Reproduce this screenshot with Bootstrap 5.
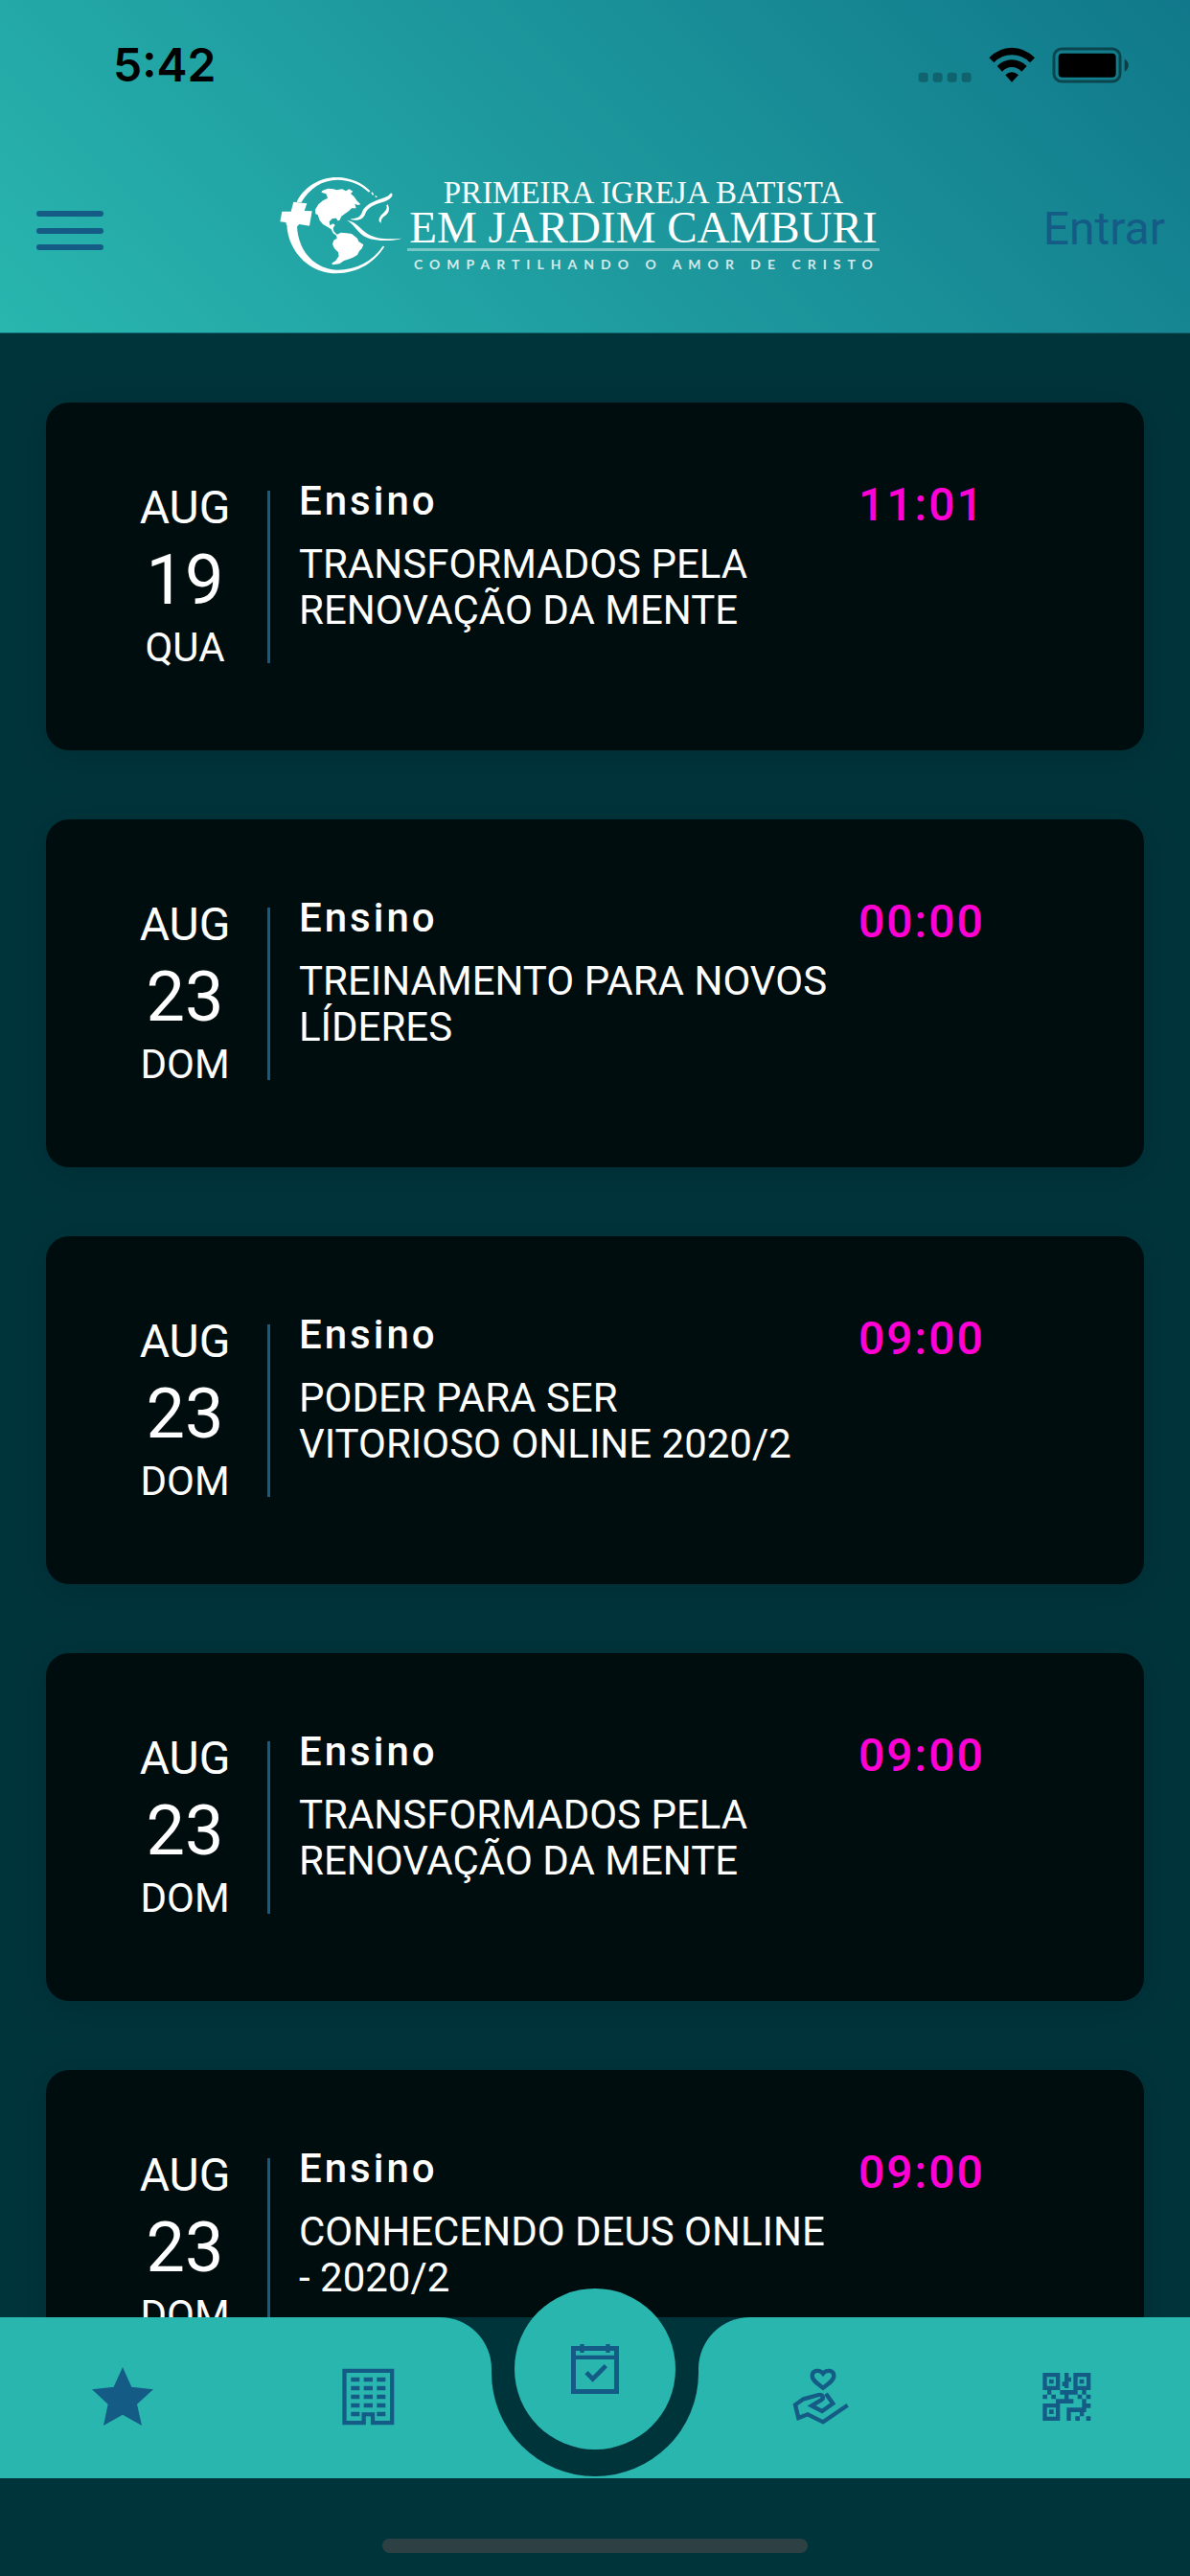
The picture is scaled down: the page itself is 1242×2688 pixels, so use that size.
<!DOCTYPE html>
<html lang="pt-BR">
<head>
<meta charset="utf-8">
<meta name="viewport" content="width=device-width, initial-scale=1">
<title>Agenda - Primeira Igreja Batista em Jardim Camburi</title>
<link href="https://cdn.jsdelivr.net/npm/bootstrap@5.3.0/dist/css/bootstrap.min.css" rel="stylesheet">
<style>
  :root { --deep: #00343b; --teal: #29b6af; --ink: #145c86; }
  body { background: var(--deep); color: #fff; font-family: Roboto, sans-serif; }
  .app-header { background: linear-gradient(45deg, #29b6af, #10788a); border-bottom: 1px solid #12606a; }
  .status-bar { height: 132px; padding: 4px 62px 0 118px; color: #000; }
  .clock { font: 600 48px/56px Inter, sans-serif; }
  .top-nav { height: 215px; padding: 2px 26px 0; }
  .menu-btn { padding: 12px; color: var(--ink); }
  .login-link { font-size: 48px; line-height: 56px; color: var(--ink); padding-bottom: 4px; }
  .brand-block { padding-bottom: 12px; }
  .brand-text { font-family: "Liberation Serif", serif; text-align: center; white-space: nowrap; }
  .brand-top { font-size: 33px; line-height: 34px; }
  .brand-main { font-size: 47px; line-height: 38px; }
  .brand-rule { height: 3px; margin: 3px 0 4px; background: rgba(255,255,255,.4); }
  .brand-tag { font: 700 14px/20px Lato, sans-serif; letter-spacing: 7px; padding-left: 7px; opacity: .8; }
  .agenda { min-height: 0; overflow-y: auto; scrollbar-width: none; padding: 72px 48px; }
  .agenda::-webkit-scrollbar { display: none; }
  .agenda-list { gap: 72px; }
  .event { min-height: 363px; border-radius: 24px; background: #000d0e; padding: 0 0 0 84px; box-shadow: 0 6px 40px rgba(0,0,0,.12); }
  .event-date { width: 122px; gap: 3px; }
  .month { font-size: 48px; line-height: 54px; }
  .day { font-size: 72px; line-height: 84px; margin-top: 4px; }
  .weekday { font-size: 42px; line-height: 50px; }
  .divider { width: 3px; height: 180px; margin: 0 30px 0 25px; background: var(--ink); }
  .event-body { padding-top: 78px; gap: 32px; }
  .event-kind { font-size: 42px; line-height: 50px; font-weight: 500; letter-spacing: 3px; margin: 0 0 17px; }
  .event-title { font-size: 42px; line-height: 48px; margin: 0; }
  .event-time { flex: 0 0 298px; font-size: 48px; line-height: 58px; font-weight: 500; letter-spacing: 2px; color: #ff00d4; }
  .tab-row { height: 168px; background: var(--deep); }
  .tab-side { background: var(--teal); }
  .tab-left { border-top-right-radius: 54px; }
  .tab-right { border-top-left-radius: 54px; }
  .tab-mid { width: 216px; background: linear-gradient(var(--deep) 54px, var(--teal) 54px); }
  .notch { height: 166px; border-radius: 0 0 108px 108px; background: var(--deep); }
  .tab-link, .tab-fab { color: var(--ink); }
  .tab-fab { top: -30px; width: 168px; height: 168px; background: var(--teal); }
  .home-zone { height: 102px; padding-top: 63px; background: var(--deep); }
  .home-bar { width: 444px; height: 15px; background: #2d4145; }
</style>
</head>
<body>
<div class="vh-100 d-flex flex-column overflow-hidden">
  <header class="app-header flex-shrink-0">
    <div class="status-bar d-flex align-items-center justify-content-between">
      <span class="clock">5:42</span>
      <svg width="222" height="38" viewBox="82 55 666 114" aria-hidden="true">
        <g fill-opacity=".25"><rect x="84" y="135" width="30" height="30" rx="9"/><rect x="129" y="135" width="30" height="30" rx="9"/><rect x="174" y="135" width="30" height="30" rx="9"/><rect x="219" y="135" width="30" height="30" rx="9"/></g>
        <path d="M305 89Q335 57 376 57T448 89L433 104Q409 80 376 80T320 104Z"/>
        <path d="M330 115Q350 95 376 95T423 115L407 132Q393 118 376 118T346 132Z"/>
        <path d="M356 143Q365 134 376 134T397 143L376 165Z"/>
        <rect x="508" y="61" width="207" height="102" rx="24" fill="none" stroke="#000" stroke-opacity=".45" stroke-width="9"/>
        <rect x="522" y="75" width="180" height="75" rx="12"/>
        <path d="M729 93Q741 98 741 112T729 132Z" fill-opacity=".5"/>
      </svg>
    </div>
    <nav class="top-nav d-flex align-items-center justify-content-between" aria-label="Principal">
      <button type="button" class="menu-btn btn border-0" aria-label="Abrir menu">
        <svg class="d-block" width="70" height="42" viewBox="0 0 70 42" stroke="currentColor" stroke-width="6" stroke-linecap="round"><path d="M3 3H67M3 21H67M3 38H67"/></svg>
      </button>
      <div class="brand-block d-flex align-items-center gap-1">
        <svg width="130" height="102" viewBox="42 42 390 306" fill="#fff" aria-hidden="true">
          <!-- orbit ring, thick on the lower left -->
          <path d="M98 122C120 75 172 44 226 45C266 46 304 62 328 88L324 92C298 68 264 53 226 53C178 53 138 80 112 124Z"/>
          <path d="M334 91L340 99L336 101L331 94ZM343 101L351 106L345 109Z"/>
          <path d="M67 188C68 275 135 345 222 346C290 345 342 312 373 262L368 260C335 308 285 335 225 335C150 332 98 270 99 190Z"/>
          <!-- cross -->
          <path d="M88 122L130 127L122 150L146 151L138 197L106 192L98 200L66 194L64 186L46 184L52 152L80 152Z"/>
          <!-- North America -->
          <path d="M178 87L196 80L214 82L222 85L240 82L252 88L262 82L274 89L267 96L278 106L286 118L298 130L290 132L280 128L284 142L270 142L262 150L248 160L238 167L232 180L226 181L222 173L210 174L200 184L202 196L212 190L218 194L212 204L214 214L224 224L232 228L226 230L212 220L206 208L194 200L180 192L170 180L164 162L157 160L156 146L166 130L180 118L195 110L190 97L175 92Z"/>
          <path d="M240 98L252 94L268 106L280 122L268 120L256 114L244 110Z"/>
          <!-- South America -->
          <path d="M222 226L236 218L254 220L270 222L288 236L292 246L307 256L302 268L294 276L288 288L274 296L258 302L246 306L232 316L210 319L208 314L220 306L230 292L228 280L216 268L210 254L214 242L224 236Z"/>
          <!-- dove wings and tail -->
          <path d="M268 175C288 174 297 169 302 156C309 132 340 120 364 112C380 107 388 102 393 94L398 98C396 111 382 118 366 123C340 131 320 140 313 158C307 175 295 182 268 178Z"/>
          <path d="M383 130C391 146 386 158 374 166C364 173 362 179 362 189L356 182C354 170 364 162 371 155C379 147 382 142 379 133Z"/>
          <path d="M255 180C286 184 296 208 320 222C350 240 386 239 428 236C402 245 350 247 318 234C288 221 280 193 255 180Z"/>
        </svg>
        <div class="brand-text">
          <div class="brand-top">PRIMEIRA IGREJA BATISTA</div>
          <div class="brand-main">EM JARDIM CAMBURI</div>
          <div class="brand-rule"></div>
          <div class="brand-tag">COMPARTILHANDO O AMOR DE CRISTO</div>
        </div>
      </div>
      <a class="login-link text-decoration-none" href="#entrar">Entrar</a>
    </nav>
  </header>

  <main class="agenda flex-grow-1">
    <div class="agenda-list d-flex flex-column">
      <article class="event d-flex">
        <div class="event-date d-flex flex-column align-items-center justify-content-center flex-shrink-0"><span class="month">AUG</span><span class="day">19</span><span class="weekday">QUA</span></div>
        <div class="divider align-self-center flex-shrink-0"></div>
        <div class="event-body d-flex flex-grow-1 align-items-start"><div class="flex-grow-1"><p class="event-kind">Ensino</p><h2 class="event-title fw-normal">TRANSFORMADOS PELA RENOVAÇÃO DA MENTE</h2></div><time class="event-time">11:01</time></div>
      </article>
      <article class="event d-flex">
        <div class="event-date d-flex flex-column align-items-center justify-content-center flex-shrink-0"><span class="month">AUG</span><span class="day">23</span><span class="weekday">DOM</span></div>
        <div class="divider align-self-center flex-shrink-0"></div>
        <div class="event-body d-flex flex-grow-1 align-items-start"><div class="flex-grow-1"><p class="event-kind">Ensino</p><h2 class="event-title fw-normal">TREINAMENTO PARA NOVOS LÍDERES</h2></div><time class="event-time">00:00</time></div>
      </article>
      <article class="event d-flex">
        <div class="event-date d-flex flex-column align-items-center justify-content-center flex-shrink-0"><span class="month">AUG</span><span class="day">23</span><span class="weekday">DOM</span></div>
        <div class="divider align-self-center flex-shrink-0"></div>
        <div class="event-body d-flex flex-grow-1 align-items-start"><div class="flex-grow-1"><p class="event-kind">Ensino</p><h2 class="event-title fw-normal">PODER PARA SER VITORIOSO ONLINE 2020/2</h2></div><time class="event-time">09:00</time></div>
      </article>
      <article class="event d-flex">
        <div class="event-date d-flex flex-column align-items-center justify-content-center flex-shrink-0"><span class="month">AUG</span><span class="day">23</span><span class="weekday">DOM</span></div>
        <div class="divider align-self-center flex-shrink-0"></div>
        <div class="event-body d-flex flex-grow-1 align-items-start"><div class="flex-grow-1"><p class="event-kind">Ensino</p><h2 class="event-title fw-normal">TRANSFORMADOS PELA RENOVAÇÃO DA MENTE</h2></div><time class="event-time">09:00</time></div>
      </article>
      <article class="event d-flex">
        <div class="event-date d-flex flex-column align-items-center justify-content-center flex-shrink-0"><span class="month">AUG</span><span class="day">23</span><span class="weekday">DOM</span></div>
        <div class="divider align-self-center flex-shrink-0"></div>
        <div class="event-body d-flex flex-grow-1 align-items-start"><div class="flex-grow-1"><p class="event-kind">Ensino</p><h2 class="event-title fw-normal">CONHECENDO DEUS ONLINE - 2020/2</h2></div><time class="event-time">09:00</time></div>
      </article>
    </div>
  </main>

  <footer class="flex-shrink-0">
    <nav class="tab-row d-flex position-relative" aria-label="Seções">
      <div class="tab-side tab-left d-flex flex-fill">
        <a class="tab-link d-flex flex-fill align-items-center justify-content-center" href="#destaques" aria-label="Destaques">
          <svg width="72" height="72" viewBox="96 78 216 216" fill="currentColor"><path d="M204 90L232 152L300 160L249 206L264 273L204 239L144 273L158 206L108 160L176 152Z"/></svg>
        </a>
        <a class="tab-link d-flex flex-fill align-items-center justify-content-center" href="#igreja" aria-label="Igreja">
          <svg width="72" height="72" viewBox="866 78 216 216" fill="none" stroke="currentColor"><path stroke-width="13" d="M897.500 101.500H1046.500V264.500H986V238H958V264.500H897.500Z"/><path stroke="#29b6af" stroke-width="14" d="M972 245V273"/><path stroke-width="13" d="M918 129H945M958 129H986M999 129H1026M918 156H945M958 156H986M999 156H1026M918 183H945M958 183H986M999 183H1026M918 210H945M958 210H986M999 210H1026M918 237H945M999 237H1026"/></svg>
        </a>
      </div>
      <div class="tab-mid flex-shrink-0"><div class="notch"></div></div>
      <div class="tab-side tab-right d-flex flex-fill">
        <a class="tab-link d-flex flex-fill align-items-center justify-content-center" href="#contribuir" aria-label="Contribuir">
          <svg width="72" height="72" viewBox="64 78 216 216" fill="none" stroke="currentColor" stroke-width="13"><path d="M178 155C160 142 144 131 144 117C144 100 167 96 178 110C189 96 212 100 212 117C212 131 196 142 178 155Z"/><path d="M255 209L178 262L130 238L101 249L91 208L117 190L164 177C177 174 182 187 172 193L142 211L175 228L209 204L187 173"/></svg>
        </a>
        <a class="tab-link d-flex flex-fill align-items-center justify-content-center" href="#qrcode" aria-label="QR Code">
          <svg width="72" height="72" viewBox="833 78 216 216" fill="currentColor"><path fill-rule="evenodd" d="M864 108h54v54h-54zM877 121v28h28v-28zM960 108h54v54h-54zM973 121v28h28v-28zM864 204h54v54h-54zM877 217v28h28v-28z"/><path d="M884 128h14v14h-14zM979 128h14v14h-14zM884 223h14v14h-14zM932 108h13v14h8v14h-8v20h-13v-6h-7v-14h7zM878 162h13v14h-13zM864 176h14v14h-14zM891 176h14v14h-14zM918 162h55v14h-28v14h15v14h-55v-14h27v-14h-14zM987 162h13v14h-13zM973 176h14v14h-14zM1000 176h14v14h-14zM987 190h13v14h-13zM1000 204h14v14h-14zM973 217h14v-13h13v27h-7v13h-13v-13h-28v27h-13v-41zM966 244h14v14h-14zM1000 244h14v14h-14z"/></svg>
        </a>
      </div>
      <a class="tab-fab position-absolute start-50 translate-middle-x rounded-circle d-flex align-items-center justify-content-center" href="#agenda" aria-label="Agenda">
        <svg width="50" height="52" viewBox="408 321 150 156" fill="none" stroke="currentColor" stroke-width="15"><path d="M415.500 334.500H550.500V469.500H415.500Z"/><path stroke-width="13" d="M415 362.500H551M442.500 321V348M523.500 321V348"/><path d="M456 410L476 430L517 389" stroke-width="14"/></svg>
      </a>
    </nav>
    <div class="home-zone"><div class="home-bar rounded-pill mx-auto"></div></div>
  </footer>
</div>
<script src="https://cdn.jsdelivr.net/npm/bootstrap@5.3.0/dist/js/bootstrap.bundle.min.js"></script>
</body>
</html>
